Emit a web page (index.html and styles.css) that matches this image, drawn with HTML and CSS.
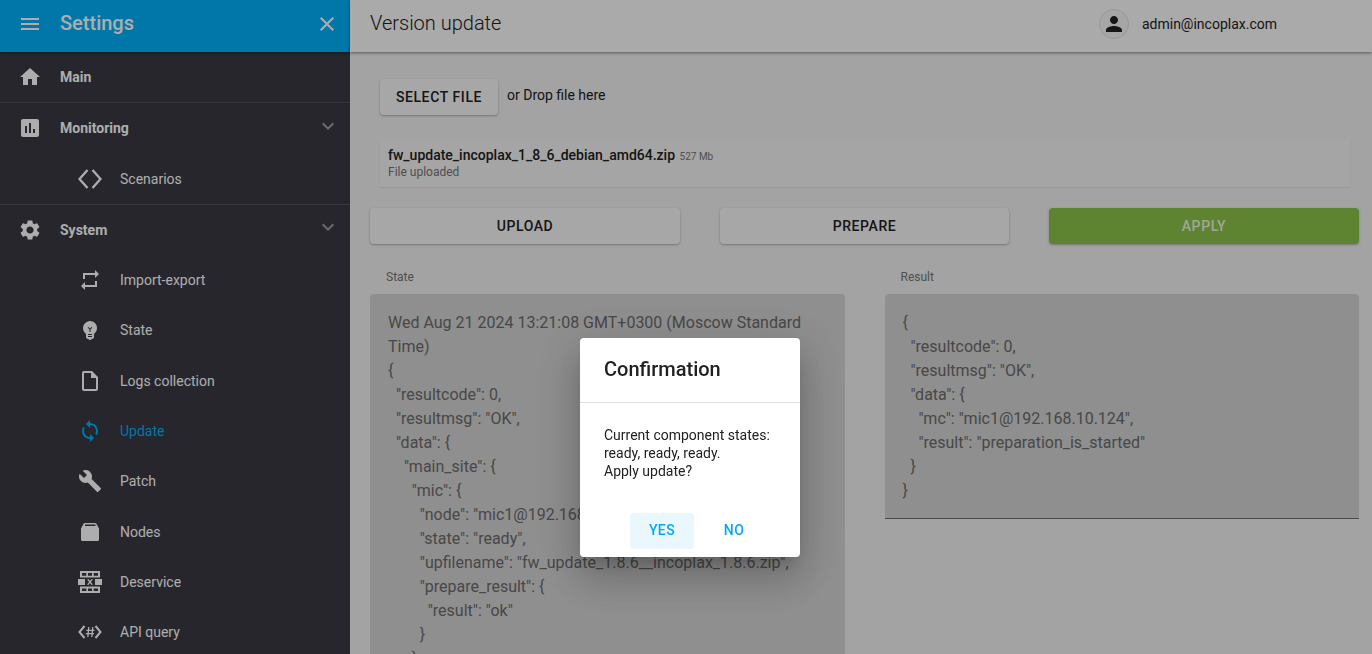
FILE: index.html
```html
<!DOCTYPE html>
<html lang="en">
<head>
<meta charset="utf-8">
<title>Version update</title>
<link rel="stylesheet" href="styles.css">
</head>
<body>
<div class="app">
  <aside class="sidebar">
    <header class="side-head">
      <svg class="icon" viewBox="0 0 24 24"><path d="M3 18h18v-2H3v2zm0-5h18v-2H3v2zm0-7v2h18V6H3z"/></svg>
      <span class="side-title">Settings</span>
      <svg class="icon close" viewBox="0 0 24 24"><path d="M19 6.41L17.59 5 12 10.59 6.41 5 5 6.41 10.59 12 5 17.59 6.41 19 12 13.41 17.59 19 19 17.59 13.41 12z"/></svg>
    </header>
    <nav>
      <section class="group">
        <div class="row top">
          <svg class="icon" viewBox="0 0 24 24"><path d="M10 20v-6h4v6h5v-8h3L12 3 2 12h3v8z"/></svg>
          <span>Main</span>
        </div>
      </section>
      <section class="group">
        <div class="row top">
          <svg class="icon" viewBox="0 0 24 24"><path d="M19 3H5c-1.1 0-2 .9-2 2v14c0 1.1.9 2 2 2h14c1.1 0 2-.9 2-2V5c0-1.1-.9-2-2-2zM9 17H7v-7h2v7zm4 0h-2V7h2v10zm4 0h-2v-4h2v4z"/></svg>
          <span>Monitoring</span>
          <svg class="icon chev" viewBox="0 0 24 24"><path d="M16.59 8.59L12 13.17 7.41 8.59 6 10l6 6 6-6z"/></svg>
        </div>
        <div class="row sub">
          <svg class="icon stroke bold" viewBox="0 0 24 24"><path d="M9.500 3L1.500 12l8 9M14.500 3l8 9-8 9"/></svg>
          <span>Scenarios</span>
        </div>
      </section>
      <section class="group last">
        <div class="row top">
          <svg class="icon" viewBox="0 0 24 24"><path d="M19.14 12.94c.04-.3.06-.61.06-.94 0-.32-.02-.64-.07-.94l2.03-1.58c.18-.14.23-.41.12-.61l-1.92-3.32c-.12-.22-.37-.29-.59-.22l-2.39.96c-.5-.38-1.03-.7-1.62-.94l-.36-2.54c-.04-.24-.24-.41-.48-.41h-3.84c-.24 0-.43.17-.47.41l-.36 2.54c-.59.24-1.13.57-1.62.94l-2.39-.96c-.22-.08-.47 0-.59.22L2.74 8.87c-.12.21-.08.47.12.61l2.03 1.58c-.05.3-.09.63-.09.94s.02.64.07.94l-2.03 1.58c-.18.14-.23.41-.12.61l1.92 3.32c.12.22.37.29.59.22l2.39-.96c.5.38 1.03.7 1.62.94l.36 2.54c.05.24.24.41.48.41h3.84c.24 0 .44-.17.47-.41l.36-2.54c.59-.24 1.13-.56 1.62-.94l2.39.96c.22.08.47 0 .59-.22l1.92-3.32c.12-.22.07-.47-.12-.61l-2.01-1.58zM12 15.6c-1.98 0-3.6-1.62-3.6-3.6s1.62-3.6 3.6-3.6 3.6 1.62 3.6 3.6-1.62 3.6-3.6 3.6z"/></svg>
          <span>System</span>
          <svg class="icon chev" viewBox="0 0 24 24"><path d="M16.59 8.59L12 13.17 7.41 8.59 6 10l6 6 6-6z"/></svg>
        </div>
        <div class="row sub">
          <svg class="icon" viewBox="0 0 24 24"><path d="M7 7h10v3l4-4-4-4v3H5v6h2V7zm10 10H7v-3l-4 4 4 4v-3h12v-6h-2v4z"/></svg>
          <span>Import-export</span>
        </div>
        <div class="row sub">
          <svg class="icon" viewBox="0 0 24 24"><path fill-rule="evenodd" d="M12 3c-.46 0-.93.04-1.4.14-2.76.53-4.96 2.76-5.48 5.52-.48 2.61.48 5.01 2.22 6.56.43.38.66.91.66 1.47V19c0 1.1.9 2 2 2h.28c.35.6.98 1 1.72 1s1.38-.4 1.72-1H14c1.1 0 2-.9 2-2v-2.31c0-.55.23-1.09.65-1.46C18.09 13.95 19 12.08 19 10c0-3.87-3.13-7-7-7zm2 16h-4v-1h4v1zm0-2h-4v-1h4v1zm-1.5-5.59V14h-1v-2.59L9.67 9.59l.71-.71L12 10.5l1.62-1.62.71.71-1.83 1.82z"/></svg>
          <span>State</span>
        </div>
        <div class="row sub">
          <svg class="icon" viewBox="0 0 24 24"><path d="M14 2H6c-1.1 0-1.99.9-1.99 2L4 20c0 1.1.89 2 1.99 2H18c1.1 0 2-.9 2-2V8l-6-6zM6 20V4h7v5h5v11H6z"/></svg>
          <span>Logs collection</span>
        </div>
        <div class="row sub active">
          <svg class="icon" viewBox="0 0 24 24"><path d="M12 4V1L8 5l4 4V6c3.31 0 6 2.69 6 6 0 1.01-.25 1.97-.7 2.8l1.46 1.46C19.54 15.03 20 13.57 20 12c0-4.42-3.58-8-8-8zm0 14c-3.31 0-6-2.69-6-6 0-1.01.25-1.97.7-2.8L5.24 7.74C4.46 8.97 4 10.43 4 12c0 4.42 3.58 8 8 8v3l4-4-4-4v3z"/></svg>
          <span>Update</span>
        </div>
        <div class="row sub">
          <svg class="icon" viewBox="0 0 24 24"><path d="M22.7 19l-9.1-9.1c.9-2.3.4-5-1.5-6.9-2-2-5-2.4-7.4-1.3L9 6 6 9 1.6 4.7C.4 7.1.9 10.1 2.9 12.1c1.9 1.9 4.6 2.4 6.9 1.5l9.1 9.1c.4.4 1 .4 1.4 0l2.3-2.3c.5-.4.5-1.1.1-1.4z"/></svg>
          <span>Patch</span>
        </div>
        <div class="row sub">
          <svg class="icon" viewBox="0 0 24 24"><path fill-rule="evenodd" d="M7 3h10c.8 0 1.300.4 1.600 1L21 8.500v11c0 .8-.7 1.500-1.500 1.500h-15C3.700 21 3 20.300 3 19.500v-11L5.400 4C5.700 3.400 6.200 3 7 3zm0 1.600v1.300h10.500V4.600H7z"/></svg>
          <span>Nodes</span>
        </div>
        <div class="row sub">
          <svg class="icon" viewBox="0 0 24 24"><path fill-rule="evenodd" d="M2 1h20v6.500H2V1zm2 2v2.700h4.300V3H4zm6 0v2.700h4V3h-4zm5.700 0v2.700H20V3h-4.300zM0 9h7v6H0V9zm17 0h7v6h-7V9zM9 9.300h1.800L12 11l1.200-1.700H15L12.900 12l2.100 2.700h-1.800L12 13l-1.200 1.700H9l2.100-2.700L9 9.300zM2 16.500h20V23H2v-6.500zm2 2v2.500h4.300v-2.500H4zm6 0v2.500h4v-2.500h-4zm5.700 0v2.500H20v-2.500h-4.300z"/></svg>
          <span>Deservice</span>
        </div>
        <div class="row sub">
          <svg class="icon stroke thin" viewBox="0 0 24 24"><path d="M6.500 6L1.500 12l5 6M17.500 6l5 6-5 6"/><path class="hash" d="M10.800 7L9.800 17M14.800 7L13.800 17M8.300 10.300H16.500M7.800 13.700H16"/></svg>
          <span>API query</span>
        </div>
      </section>
    </nav>
  </aside>

  <main class="main">
    <header class="topbar">
      <h1 class="page-title">Version update</h1>
      <div class="user">
        <span class="avatar">
          <svg class="icon" viewBox="0 0 24 24"><path d="M12 12c2.21 0 4-1.790 4-4s-1.790-4-4-4-4 1.790-4 4 1.790 4 4 4zm0 2c-2.670 0-8 1.340-8 4v2h16v-2c0-2.660-5.330-4-8-4z"/></svg>
        </span>
        <span>admin@incoplax.com</span>
      </div>
    </header>
    <div class="content">
      <div class="drop">
        <button class="btn select">Select file</button>
        <span class="drop-hint">or Drop file here</span>
      </div>
      <div class="file">
        <div><span class="file-name">fw_update_incoplax_1_8_6_debian_amd64.zip</span> <span class="file-size">527 Mb</span></div>
        <div class="file-status">File uploaded</div>
      </div>
      <div class="actions">
        <button class="btn wide">Upload</button>
        <button class="btn mid">Prepare</button>
        <button class="btn wide apply">Apply</button>
      </div>
      <div class="panels">
        <div class="panel">
          <div class="panel-label">State</div>
          <pre class="panel-body">Wed Aug 21 2024 13:21:08 GMT+0300 (Moscow Standard Time)
{
  "resultcode": 0,
  "resultmsg": "OK",
  "data": {
    "main_site": {
      "mic": {
        "node": "mic1@192.168.10.124",
        "state": "ready",
        "upfilename": "fw_update_1.8.6__incoplax_1.8.6.zip",
        "prepare_result": {
          "result": "ok"
        }
      }
    }
  }
}</pre>
        </div>
        <div class="panel">
          <div class="panel-label">Result</div>
          <pre class="panel-body ruled">{
  "resultcode": 0,
  "resultmsg": "OK",
  "data": {
    "mc": "mic1@192.168.10.124",
    "result": "preparation_is_started"
  }
}</pre>
        </div>
      </div>
    </div>
  </main>
</div>

<div class="backdrop"></div>
<div class="dialog">
  <h2 class="dialog-title">Confirmation</h2>
  <div class="dialog-body">Current component states:<br>ready, ready, ready.<br>Apply update?</div>
  <div class="dialog-actions">
    <button class="dlg-btn focus">Yes</button>
    <button class="dlg-btn">No</button>
  </div>
</div>
</body>
</html>
```
FILE: styles.css
```css
* { box-sizing: border-box; }
html, body { margin: 0; height: 100%; overflow: hidden; }
body { font-family: Roboto, "Liberation Sans", sans-serif; font-size: 14px; color: #212121; background: #f0f0f0; }
button { font-family: inherit; border: 0; cursor: pointer; }

.app { display: flex; height: 654px; overflow: hidden; }
.icon { width: 24px; height: 24px; flex: none; fill: currentColor; display: block; }
.icon.stroke { fill: none; stroke: currentColor; stroke-width: 2; }
.icon.bold { stroke-width: 2.400; }
.icon.thin .hash { stroke-width: 1.300; }

.sidebar { width: 350px; flex: none; background: #383842; color: #fff; overflow: hidden; }
.side-head { height: 52px; background: #00aefa; display: flex; align-items: center; padding: 0 11px 4px 18px; gap: 18px; box-shadow: 0 1px 3px rgba(0,0,0,.4); position: relative; }
.side-title { font-size: 20px; font-weight: 500; flex: 1; margin-bottom: 2px; }
.group { border-bottom: 1px solid rgba(255,255,255,.12); }
.group.last { border-bottom: 0; }
.row { height: 50.27px; display: flex; align-items: center; gap: 18px; }
.row.top { padding: 0 10px 0 18px; font-weight: 700; }
.row.top span { flex: 1; }
.row.sub { padding-left: 78px; }
.row.active { color: #00aefa; }
.chev { opacity: .5; margin-bottom: 5px; }

.main { flex: 1; min-width: 0; background: #f0f0f0; display: flex; flex-direction: column; }
.topbar { height: 52px; flex: none; background: #fbfbfb; display: flex; align-items: center; justify-content: space-between; padding: 0 95px 4px 20px; box-shadow: 0 1px 3px rgba(0,0,0,.45); position: relative; }
.page-title { margin: 0 0 2px; font-size: 20px; font-weight: 300; }
.user { display: flex; align-items: center; gap: 13px; }
.avatar { width: 30px; height: 30px; border-radius: 50%; border: 1px solid #e0e0e0; display: flex; align-items: center; justify-content: center; background: #f5f5f5; }

.content { flex: 1; padding: 27px 13px 0 20px; }
.drop { display: flex; align-items: flex-start; margin-left: 10px; }
.drop-hint { margin: 8px 0 0 9px; line-height: 16px; font-size: 14px; }
.btn { height: 36px; border-radius: 4px; background: #f7f7f7; color: #212121; font-size: 14px; font-weight: 500; letter-spacing: .6px; text-transform: uppercase; box-shadow: 0 1px 3px rgba(0,0,0,.2), 0 1px 1px rgba(0,0,0,.1); }
.select { width: 118px; }
.file { margin: 24px 9px 0 10px; height: 48px; padding: 8px; background: #f3f3f3; box-shadow: 0 1px 1px rgba(0,0,0,.06); line-height: 16px; }
.file-name { font-weight: 500; }
.file-size { font-size: 10px; color: #757575; margin-left: 1px; }
.file-status { font-size: 12px; line-height: 15px; color: #757575; }
.actions { display: flex; justify-content: space-between; margin-top: 21px; }
.wide { width: 310px; }
.mid { width: 289px; }
.apply { background: #8bc34a; color: rgba(255,255,255,.85); }
.panels { display: flex; gap: 40px; margin-top: 25px; }
.panel { flex: 1; min-width: 0; }
.panel-label { font-size: 12px; line-height: 16px; color: #757575; padding-left: 16px; margin-bottom: 9px; }
.panel-body { margin: 0; padding: 17px 18px 16px; background: #d3d3d3; border-radius: 4px 4px 0 0; font-family: inherit; font-size: 16px; line-height: 24px; color: #6a6a6a; white-space: pre-wrap; }
.panel-body.ruled { border-bottom: 1px solid #707070; padding-bottom: 15px; }

.backdrop { position: fixed; inset: 0; background: rgba(0,0,0,.32); }
.dialog { position: fixed; left: 580px; top: 338px; width: 220px; height: 219px; background: #fff; border-radius: 4px; box-shadow: 0 11px 15px -7px rgba(0,0,0,.2), 0 24px 38px 3px rgba(0,0,0,.14), 0 9px 46px 8px rgba(0,0,0,.12); }
.dialog-title { margin: 0; height: 65px; padding: 19px 24px 0; font-size: 20px; line-height: 24px; font-weight: 500; border-bottom: 1px solid #e0e0e0; }
.dialog-body { padding: 23px 24px 0; line-height: 18px; height: 110px; color: #212121; }
.dialog-actions { display: flex; justify-content: flex-end; gap: 8px; padding-right: 34px; }
.dlg-btn { width: 64px; height: 36px; border-radius: 4px; background: transparent; color: #03a9f4; font-size: 14px; font-weight: 500; letter-spacing: .4px; text-transform: uppercase; padding: 0 0 2px; }
.dlg-btn.focus { background: #ebf7fe; }
```
